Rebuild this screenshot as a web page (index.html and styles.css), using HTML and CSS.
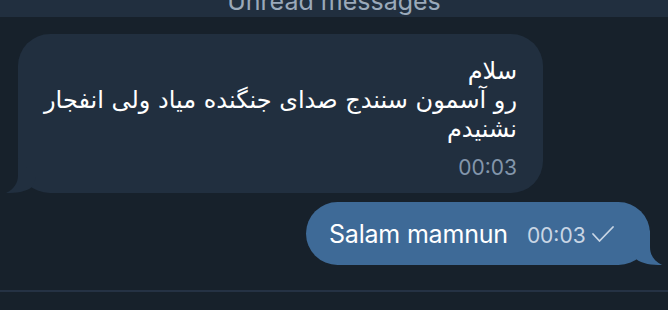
FILE: index.html
```html
<!DOCTYPE html>
<html lang="fa">

<head>
    <meta charset="UTF-8">
    <meta name="viewport" content="width=device-width, initial-scale=1.0">
    <title>Chat</title>
    <link rel="stylesheet" href="styles.css">
</head>

<body>
    <div class="unread">
        <span>Unread messages</span>
    </div>

    <div id="chat">
        <div class="row row-in">
            <div class="bubble bubble-in">
                <p class="msg-text" dir="rtl">سلام<br>رو آسمون سنندج صدای جنگنده میاد ولی انفجار نشنیدم</p>
                <div class="msg-meta">
                    <span class="time">00:03</span>
                </div>
                <svg class="tail tail-in" width="40" height="36" viewBox="0 0 40 36">
                    <path d="M12 0 L12 17 C12 25 8 31 0 35 C10 35 20 34 26 29 L30 20 Z" />
                </svg>
            </div>
        </div>

        <div class="row row-out">
            <div class="bubble bubble-out">
                <span class="msg-text">Salam mamnun</span>
                <span class="time">00:03</span>
                <svg class="check" width="24" height="20" viewBox="0 0 24 20">
                    <path d="M2 9 L8.5 16 L22 2" />
                </svg>
                <svg class="tail tail-out" width="40" height="36" viewBox="0 0 40 36">
                    <path d="M28 0 L28 17 C28 25 32 31 40 35 C30 35 20 34 14 29 L10 20 Z" />
                </svg>
            </div>
        </div>
    </div>

    <div class="composer-line"></div>
</body>

</html>
```

FILE: styles.css
```css
body {
    margin: 0;
    height: 310px;
    overflow: hidden;
    font-family: "Inter", "DejaVu Sans", sans-serif;
    background-color: #17212b;
    color: #fff;
}

.unread {
    height: 17px;
    overflow: hidden;
    background-color: #212f3f;
    text-align: center;
    color: #9aa9ba;
    font-size: 25px;
    line-height: 25px;
}

.unread span {
    display: block;
    margin-top: -11px;
}

#chat {
    display: flex;
    flex-direction: column;
    gap: 9px;
    padding: 17px 18px 0 18px;
}

.row {
    display: flex;
}

.row-out {
    justify-content: flex-end;
}

.bubble {
    position: relative;
    border-radius: 32px;
}

.bubble-in {
    width: 525px;
    height: 159px;
    box-sizing: border-box;
    padding: 23px 26px 0 10px;
    background-color: #212f3f;
}

.bubble-in .msg-text {
    margin: 0;
    font-size: 24px;
    line-height: 29px;
    font-family: "DejaVu Sans", sans-serif;
}

.msg-meta {
    display: flex;
    justify-content: flex-end;
    margin-top: 13px;
    line-height: 21px;
}

.bubble-in .time {
    color: #8396ab;
    font-size: 21px;
}

.bubble-out {
    display: flex;
    align-items: center;
    height: 63px;
    width: 344px;
    box-sizing: border-box;
    padding: 0 0 0 23px;
    background-color: #3e6a97;
    border-radius: 32px;
}

.bubble-out .msg-text {
    font-size: 25px;
    letter-spacing: -0.2px;
    color: #fff;
}

.bubble-out .time {
    margin-left: 19px;
    margin-top: 3px;
    font-size: 21px;
    color: #c9d6e5;
}

.check {
    margin-left: 5px;
    margin-top: 3px;
}

.check path {
    fill: none;
    stroke: #c9d6e5;
    stroke-width: 1.8;
    stroke-linecap: round;
    stroke-linejoin: round;
}

.tail {
    position: absolute;
    bottom: -1px;
}

.tail-in {
    left: -12px;
}

.tail-in path {
    fill: #212f3f;
}

.tail-out {
    right: -12px;
}

.tail-out path {
    fill: #3e6a97;
}

.composer-line {
    height: 2px;
    margin-top: 25px;
    background-color: #253244;
}
```
